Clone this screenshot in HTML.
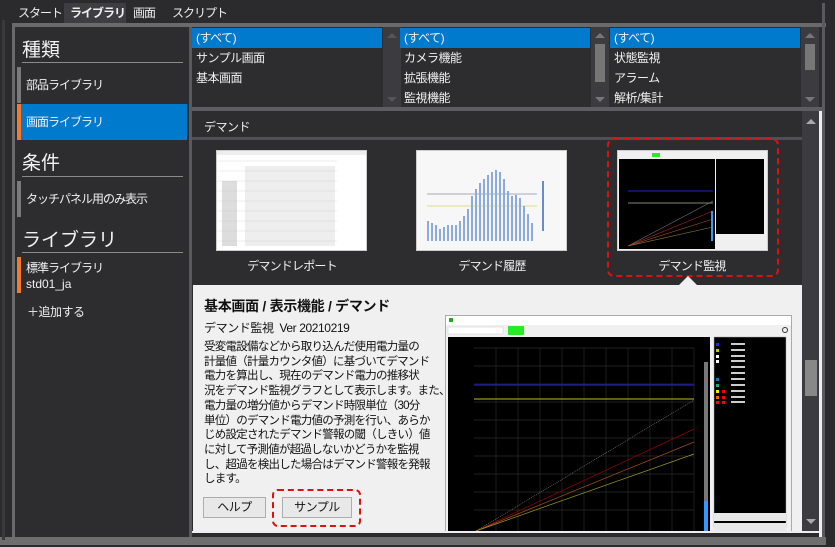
<!DOCTYPE html>
<html><head><meta charset="utf-8"><style>
*{margin:0;padding:0;box-sizing:border-box}
html,body{width:835px;height:547px;overflow:hidden}
body{background:#2b2b2e;font-family:"Liberation Sans","Noto Sans CJK JP",sans-serif;color:#f0f0f0;position:relative;font-size:13px}
.a{position:absolute}
.tab{position:absolute;top:3px;height:20px;line-height:20px;font-size:12px;letter-spacing:-1px;color:#eee}
.h{position:absolute;left:22px;font-size:19px;color:#f2f2f2}
.hl{position:absolute;left:22px;width:161px;height:1px;background:#8a8a8a}
.item{position:absolute;left:17px;width:170px;font-size:12px;letter-spacing:-1px}
.bar{position:absolute;left:0;top:0;bottom:0;width:4px}
.row{height:20px;line-height:20px;padding-left:4px;font-size:12px;letter-spacing:-0.5px;white-space:nowrap}
.sel{background:#007acc}
.sb{position:absolute;width:18px;background:#3c3c40}
.up,.dn{position:absolute;left:4px;width:0;height:0;border-left:5px solid transparent;border-right:5px solid transparent}
.up{border-bottom:5px solid #777}
.dn{border-top:5px solid #777}
.lbl{position:absolute;top:257px;font-size:12px;letter-spacing:-0.8px;text-align:center;width:160px}
p.t{font-size:11.5px;letter-spacing:-0.75px;line-height:14.7px;color:#111;white-space:nowrap}
.btn{position:absolute;top:497px;height:21px;border:1px solid #adadad;background:#e8e8e8;color:#111;text-align:center;line-height:19px;font-size:12px;letter-spacing:-0.5px}
</style></head><body>
<div class="tab" style="left:18px">スタート</div>
<div class="a" style="left:64px;top:3px;width:62px;height:20px;background:#3e3e42"></div>
<div class="tab" style="left:70px;font-weight:bold">ライブラリ</div>
<div class="tab" style="left:133px">画面</div>
<div class="tab" style="left:172px">スクリプト</div>
<div class="a" style="left:12px;top:23px;width:814px;height:4px;background:#6a6a6a"></div>
<div class="a" style="left:12px;top:23px;width:3px;height:514px;background:#6a6a6a"></div>
<div class="a" style="left:822px;top:3px;width:3px;height:540px;background:#5a5a5e"></div>
<div class="a" style="left:0;top:537px;width:826px;height:8px;background:#6e6e6e"></div>
<div class="a" style="left:2px;top:20px;width:3px;height:520px;background:#3a3a3d"></div>
<div class="a" style="left:15px;top:27px;width:176px;height:510px;background:#2d2d30"></div>
<div class="a" style="left:189px;top:27px;width:3px;height:510px;background:#5a5a5e"></div>
<div class="h" style="top:35px">種類</div><div class="hl" style="top:62px"></div>
<div class="item" style="top:67px;height:36px;line-height:36px"><div class="bar" style="background:#7a7a7a"></div><span style="padding-left:9px">部品ライブラリ</span></div>
<div class="item" style="top:104px;height:36px;line-height:36px;background:#007acc"><div class="bar" style="background:#f47a2a"></div><span style="padding-left:9px">画面ライブラリ</span></div>
<div class="h" style="top:148px">条件</div><div class="hl" style="top:176px"></div>
<div class="item" style="top:181px;height:36px;line-height:36px"><div class="bar" style="background:#7a7a7a"></div><span style="padding-left:9px">タッチパネル用のみ表示</span></div>
<div class="h" style="top:225px">ライブラリ</div><div class="hl" style="top:252px"></div>
<div class="item" style="top:257px;height:36px"><div class="bar" style="background:#f47a2a"></div><div style="padding-left:9px;line-height:16px;padding-top:3px">標準ライブラリ<br><span style="letter-spacing:0">std01_ja</span></div></div>
<div class="a" style="left:27px;top:303px;font-size:12px;letter-spacing:-0.5px">＋追加する</div>
<div class="a" style="left:192px;top:27px;width:630px;height:81px;background:#2d2d30"></div>
<div class="a" style="left:192px;top:28px;width:190px"><div class="row sel">(すべて)</div><div class="row">サンプル画面</div><div class="row">基本画面</div></div>
<div class="sb" style="left:383px;top:27px;height:80px"><div class="up" style="top:6px;border-bottom-color:#555"></div><div class="dn" style="top:70px;border-top-color:#555"></div></div>
<div class="a" style="left:400px;top:28px;width:190px"><div class="row sel">(すべて)</div><div class="row">カメラ機能</div><div class="row">拡張機能</div><div class="row">監視機能</div></div>
<div class="sb" style="left:591px;top:27px;height:80px"><div class="up" style="top:6px"></div><div class="a" style="left:4px;top:17px;width:10px;height:38px;background:#777"></div><div class="dn" style="top:70px"></div></div>
<div class="a" style="left:610px;top:28px;width:190px"><div class="row sel">(すべて)</div><div class="row">状態監視</div><div class="row">アラーム</div><div class="row">解析/集計</div></div>
<div class="sb" style="left:801px;top:27px;height:80px"><div class="up" style="top:6px"></div><div class="a" style="left:4px;top:17px;width:10px;height:26px;background:#777"></div><div class="dn" style="top:70px"></div></div>
<div class="a" style="left:192px;top:107px;width:630px;height:4px;background:#5e5e62"></div>
<div class="a" style="left:192px;top:111px;width:610px;height:27px;background:#2d2d30"></div>
<div class="a" style="left:204px;top:118px;font-size:12px;letter-spacing:-0.5px">デマンド</div>
<div class="a" style="left:192px;top:137px;width:610px;height:3px;background:#505054"></div>
<div class="a" style="left:192px;top:140px;width:610px;height:145px;background:#2d2d30"></div>
<div class="a" style="left:216px;top:150px;width:151px;height:101px;background:#fff;border:1px solid #ccc">
<svg width="149" height="99"><rect x="0" y="0" width="149" height="4" fill="#eee"/><g stroke="#ddd" stroke-width="0.6">
<line x1="0" y1="10" x2="120" y2="10"/><line x1="0" y1="20" x2="120" y2="20"/><line x1="0" y1="30" x2="120" y2="30"/><line x1="0" y1="40" x2="120" y2="40"/><line x1="0" y1="50" x2="120" y2="50"/><line x1="0" y1="60" x2="120" y2="60"/><line x1="0" y1="70" x2="120" y2="70"/><line x1="0" y1="80" x2="120" y2="80"/><line x1="0" y1="90" x2="120" y2="90"/></g>
<g fill="#bbb"><rect x="5" y="30" width="15" height="65" opacity=".5"/><rect x="28" y="15" width="90" height="80" opacity=".25"/></g></svg></div>
<div class="a" style="left:416px;top:150px;width:151px;height:101px;background:#f7f7f7;border:1px solid #ccc">
<svg width="149" height="99"><line x1="10" y1="43" x2="120" y2="43" stroke="#aab" /><line x1="10" y1="55" x2="120" y2="55" stroke="#dd8"/>
<g fill="#8aaae0">
<rect x="10" y="70" width="2" height="20"/><rect x="14" y="72" width="2" height="18"/><rect x="18" y="74" width="2" height="16"/><rect x="22" y="78" width="2" height="12"/><rect x="26" y="76" width="2" height="14"/><rect x="30" y="74" width="2" height="16"/><rect x="34" y="74" width="2" height="16"/><rect x="38" y="74" width="2" height="16"/><rect x="42" y="70" width="2" height="20"/><rect x="46" y="65" width="2" height="25"/><rect x="50" y="58" width="2" height="32"/><rect x="54" y="45" width="2" height="45"/><rect x="58" y="38" width="2" height="52"/><rect x="62" y="32" width="2" height="58"/><rect x="66" y="28" width="2" height="62"/><rect x="70" y="24" width="2" height="66"/><rect x="74" y="21" width="2" height="69"/><rect x="78" y="19" width="2" height="71"/><rect x="82" y="21" width="2" height="69"/><rect x="86" y="28" width="2" height="62"/><rect x="90" y="40" width="2" height="50"/><rect x="94" y="45" width="2" height="45"/><rect x="98" y="44" width="2" height="46"/><rect x="102" y="47" width="2" height="43"/><rect x="106" y="55" width="2" height="35"/><rect x="110" y="63" width="2" height="27"/><rect x="114" y="72" width="2" height="18"/></g>
<g fill="#6a8ad0"><rect x="125" y="30" width="2" height="50"/></g></svg></div>
<div class="a" style="left:617px;top:150px;width:151px;height:101px;background:#f0f0f0;border:1px solid #ccc">
<svg width="149" height="99"><rect x="1" y="8" width="96" height="90" fill="#000"/><rect x="98" y="8" width="48" height="75" fill="#000"/>
<line x1="10" y1="40" x2="95" y2="40" stroke="#22c"/><line x1="10" y1="52" x2="95" y2="52" stroke="#886"/>
<line x1="10" y1="95" x2="95" y2="50" stroke="#777" stroke-width=".6"/><line x1="10" y1="95" x2="95" y2="60" stroke="#a22" stroke-width=".6"/><line x1="10" y1="95" x2="95" y2="68" stroke="#a52" stroke-width=".6"/><line x1="10" y1="95" x2="95" y2="76" stroke="#883" stroke-width=".6"/>
<rect x="34" y="2" width="8" height="4" fill="#2e2"/><rect x="93" y="60" width="2" height="30" fill="#39f"/></svg></div>
<div class="lbl" style="left:212px">デマンドレポート</div>
<div class="lbl" style="left:412px">デマンド履歴</div>
<div class="lbl" style="left:612px">デマンド監視</div>
<div class="a" style="left:607px;top:138px;width:172px;height:139px;border:2px dashed #e01010;border-radius:7px"></div>
<div class="a" style="left:193px;top:285px;width:609px;height:248px;background:#f0f0f0"></div>
<div class="a" style="left:679px;top:276px;width:0;height:0;border-left:9px solid transparent;border-right:9px solid transparent;border-bottom:9px solid #f0f0f0"></div>
<div class="a" style="left:204px;top:296px;font-size:14px;font-weight:bold;color:#111;letter-spacing:-0.3px">基本画面 / 表示機能 / デマンド</div>
<div class="a" style="left:204px;top:319px;font-size:12px;color:#111;letter-spacing:-0.4px">デマンド監視&nbsp; Ver 20210219</div>
<div class="a" style="left:204px;top:340px"><p class="t">受変電設備などから取り込んだ使用電力量の<br>計量値（計量カウンタ値）に基づいてデマンド<br>電力を算出し、現在のデマンド電力の推移状<br>況をデマンド監視グラフとして表示します。また、<br>電力量の増分値からデマンド時限単位（30分<br>単位）のデマンド電力値の予測を行い、あらか<br>じめ設定されたデマンド警報の閾（しきい）値<br>に対して予測値が超過しないかどうかを監視<br>し、超過を検出した場合はデマンド警報を発報<br>します。</p></div>
<div class="btn" style="left:203px;width:63px">ヘルプ</div>
<div class="btn" style="left:282px;width:70px">サンプル</div>
<div class="a" style="left:272px;top:489px;width:89px;height:38px;border:2px dashed #e01010;border-radius:6px"></div>
<div class="a" style="left:445px;top:315px;width:347px;height:218px;background:#f0f0f0;border:1px solid #aaa">
<svg width="345" height="217">
<rect x="0" y="0" width="345" height="9" fill="#fff"/><rect x="3" y="2" width="4" height="4" fill="#2a2"/>
<rect x="2" y="11" width="55" height="7" fill="#fff" stroke="#ccc" stroke-width=".5"/><rect x="62" y="10" width="16" height="9" fill="#2e2"/>
<rect x="2" y="21" width="262" height="196" fill="#000"/>
<g stroke="#2a2a2a" stroke-width=".7"><line x1="28" y1="32" x2="248" y2="32"/><line x1="28" y1="50" x2="248" y2="50"/><line x1="28" y1="68" x2="248" y2="68"/><line x1="28" y1="86" x2="248" y2="86"/><line x1="28" y1="104" x2="248" y2="104"/><line x1="28" y1="122" x2="248" y2="122"/><line x1="28" y1="140" x2="248" y2="140"/><line x1="28" y1="158" x2="248" y2="158"/><line x1="28" y1="176" x2="248" y2="176"/><line x1="28" y1="194" x2="248" y2="194"/>
<line x1="50" y1="32" x2="50" y2="217"/><line x1="72" y1="32" x2="72" y2="217"/><line x1="94" y1="32" x2="94" y2="217"/><line x1="116" y1="32" x2="116" y2="217"/><line x1="138" y1="32" x2="138" y2="217"/><line x1="160" y1="32" x2="160" y2="217"/><line x1="182" y1="32" x2="182" y2="217"/><line x1="204" y1="32" x2="204" y2="217"/><line x1="226" y1="32" x2="226" y2="217"/><line x1="248" y1="32" x2="248" y2="217"/></g>
<line x1="28" y1="69" x2="248" y2="69" stroke="#1c1cc0" stroke-width="1.2"/>
<line x1="28" y1="83" x2="248" y2="83" stroke="#9a9a10" stroke-width="1.2"/>
<line x1="30" y1="215" x2="248" y2="84" stroke="#888" stroke-width=".6" stroke-dasharray="1,1"/>
<line x1="30" y1="215" x2="248" y2="113" stroke="#900" stroke-width=".7"/>
<line x1="30" y1="215" x2="248" y2="126" stroke="#a5501a" stroke-width=".7"/>
<line x1="30" y1="215" x2="248" y2="138" stroke="#9a9a20" stroke-width=".7"/>
<rect x="258" y="46" width="4" height="171" fill="#777"/><rect x="258" y="185" width="4" height="32" fill="#39f"/>
<rect x="268" y="21" width="72" height="190" fill="#000" stroke="#aaa" stroke-width=".5"/>
<g><rect x="270" y="27" width="3" height="3" fill="#22f"/><rect x="270" y="33" width="3" height="3" fill="#bc0"/><rect x="270" y="39" width="3" height="3" fill="#fff"/><rect x="270" y="44" width="3" height="3" fill="#fff"/><rect x="270" y="62" width="3" height="3" fill="#17a"/><rect x="270" y="68" width="3" height="3" fill="#2a6"/><rect x="270" y="74" width="3" height="3" fill="#ee0"/><rect x="270" y="80" width="3" height="3" fill="#e60"/><rect x="270" y="85" width="3" height="3" fill="#f00"/><rect x="276" y="74" width="3" height="3" fill="#f00"/><rect x="276" y="80" width="3" height="3" fill="#f00"/><rect x="276" y="85" width="3" height="3" fill="#f00"/></g>
<g fill="#ccc"><rect x="285" y="27" width="14" height="2"/><rect x="285" y="33" width="14" height="2"/><rect x="285" y="39" width="14" height="2"/><rect x="285" y="44" width="14" height="2"/><rect x="285" y="50" width="14" height="2"/><rect x="285" y="56" width="14" height="2"/><rect x="285" y="62" width="14" height="2"/><rect x="285" y="68" width="14" height="2"/><rect x="285" y="74" width="14" height="2"/><rect x="285" y="80" width="14" height="2"/><rect x="285" y="85" width="14" height="2"/></g>
<rect x="268" y="197" width="72" height="8" fill="#e8e8e8"/><rect x="268" y="207" width="72" height="8" fill="#e8e8e8"/>
<circle cx="339" cy="14" r="2.5" fill="none" stroke="#333"/>
</svg></div>
<div class="sb" style="left:802px;top:111px;height:421px;background:#3c3c40"><div class="up" style="top:8px;border-bottom-color:#aaa"></div><div class="a" style="left:3px;top:249px;width:12px;height:36px;background:#888"></div><div class="dn" style="top:408px;border-top-color:#aaa"></div></div>
<div class="a" style="left:819px;top:111px;width:3px;height:426px;background:#eee"></div>
<div class="a" style="left:192px;top:531px;width:630px;height:2px;background:#eee"></div>
</body></html>
